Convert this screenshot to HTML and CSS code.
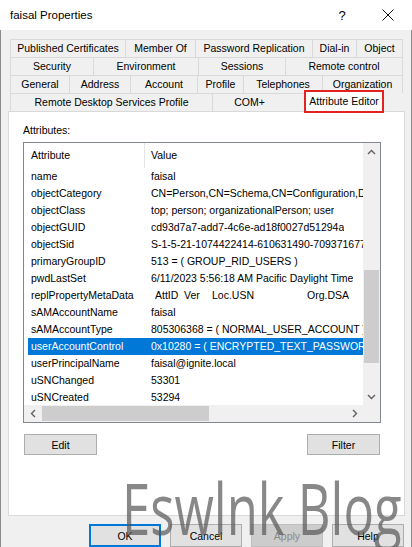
FILE: index.html
```html
<!DOCTYPE html>
<html lang="en">
<head>
<meta charset="utf-8">
<title>faisal Properties</title>
<link rel="stylesheet" href="styles.css">
</head>
<body>
<div class="window">
  <div class="titlebar">
    <span class="title">faisal Properties</span>
    <span class="help">?</span>
    <svg class="close" width="12" height="12" viewBox="0 0 12 12"><path d="M0.5 0.5L11.5 11.5M11.5 0.5L0.5 11.5" stroke="#111" stroke-width="1" fill="none"/></svg>
  </div>

  <div class="dialog">
    <div class="tabs">
      <div class="tabrow r1">
        <div class="tab">Published Certificates</div>
        <div class="tab">Member Of</div>
        <div class="tab">Password Replication</div>
        <div class="tab">Dial-in</div>
        <div class="tab">Object</div>
      </div>
      <div class="tabrow r2">
        <div class="tab">Security</div>
        <div class="tab">Environment</div>
        <div class="tab">Sessions</div>
        <div class="tab">Remote control</div>
      </div>
      <div class="tabrow r3">
        <div class="tab">General</div>
        <div class="tab">Address</div>
        <div class="tab">Account</div>
        <div class="tab">Profile</div>
        <div class="tab">Telephones</div>
        <div class="tab">Organization</div>
      </div>
      <div class="tabrow r4">
        <div class="tab">Remote Desktop Services Profile</div>
        <div class="tab com">COM+</div>
        <div class="tab sel">Attribute Editor</div>
      </div>
    </div>

    <div class="panel">
      <div class="label">Attributes:</div>
      <div class="list">
        <div class="listmain">
          <div class="header">
            <div class="hcol ha">Attribute</div>
            <div class="hcol hv">Value</div>
          </div>
          <div class="rows">
            <div class="row"><span class="a">name</span><span class="v">faisal</span></div>
            <div class="row"><span class="a">objectCategory</span><span class="v">CN=Person,CN=Schema,CN=Configuration,DC=ignite,DC=local</span></div>
            <div class="row"><span class="a">objectClass</span><span class="v">top; person; organizationalPerson; user</span></div>
            <div class="row"><span class="a">objectGUID</span><span class="v">cd93d7a7-add7-4c6e-ad18f0027d51294a</span></div>
            <div class="row"><span class="a">objectSid</span><span class="v">S-1-5-21-1074422414-610631490-709371677-1604</span></div>
            <div class="row"><span class="a">primaryGroupID</span><span class="v">513 = ( GROUP_RID_USERS )</span></div>
            <div class="row"><span class="a">pwdLastSet</span><span class="v">6/11/2023 5:56:18 AM Pacific Daylight Time</span></div>
            <div class="row"><span class="a">replPropertyMetaData</span><span class="v meta"><span class="m1">AttID</span><span class="m2">Ver</span><span class="m3">Loc.USN</span><span class="m4">Org.DSA</span></span></div>
            <div class="row"><span class="a">sAMAccountName</span><span class="v">faisal</span></div>
            <div class="row"><span class="a">sAMAccountType</span><span class="v">805306368 = ( NORMAL_USER_ACCOUNT )</span></div>
            <div class="row selected"><span class="a">userAccountControl</span><span class="v">0x10280 = ( ENCRYPTED_TEXT_PASSWORD_ALLOWED | NORMAL_ACCOUNT )</span></div>
            <div class="row"><span class="a">userPrincipalName</span><span class="v">faisal@ignite.local</span></div>
            <div class="row"><span class="a">uSNChanged</span><span class="v">53301</span></div>
            <div class="row"><span class="a">uSNCreated</span><span class="v">53294</span></div>
          </div>
        </div>

        <div class="vscroll">
          <div class="arrow"><svg width="9" height="6" viewBox="0 0 9 6"><path d="M1 5L4.5 1.5L8 5" fill="none" stroke="#606060" stroke-width="1.4"/></svg></div>
          <div class="vtrack"><div class="vthumb" style="margin-top:110px;height:93px"></div></div>
          <div class="arrow"><svg width="9" height="6" viewBox="0 0 9 6"><path d="M1 1L4.5 4.5L8 1" fill="none" stroke="#606060" stroke-width="1.4"/></svg></div>
        </div>

        <div class="hscroll">
          <div class="arrow"><svg width="6" height="9" viewBox="0 0 6 9"><path d="M5 1L1.5 4.5L5 8" fill="none" stroke="#606060" stroke-width="1.4"/></svg></div>
          <div class="htrack"><div class="hthumb" style="margin-left:1px;width:167px"></div></div>
          <div class="arrow"><svg width="6" height="9" viewBox="0 0 6 9"><path d="M1 1L4.5 4.5L1 8" fill="none" stroke="#606060" stroke-width="1.4"/></svg></div>
        </div>

        <div class="corner"></div>
      </div>

      <div class="actions">
        <button class="btn small">Edit</button>
        <button class="btn small">Filter</button>
      </div>
    </div>

    <div class="footer">
      <button class="btn wide default">OK</button>
      <button class="btn wide">Cancel</button>
      <button class="btn wide disabled">Apply</button>
      <button class="btn wide">Help</button>
    </div>
  </div>

  <div class="watermark">Eswlnk Blog</div>
</div>
</body>
</html>
```

FILE: styles.css
```css
html, body {
  margin: 0;
  padding: 0;
  width: 412px;
  height: 547px;
  overflow: hidden;
  background: #f0f0f0;
}

.window {
  position: relative;
  width: 412px;
  height: 547px;
  overflow: hidden;
  font-family: "Liberation Sans", Arial, sans-serif;
  font-size: 10.5px;
  color: #000;
}

/* ---- title bar ---- */
.titlebar {
  height: 30px;
  background: #fff;
  display: flex;
  align-items: center;
  padding-left: 10px;
  box-sizing: border-box;
}
.title {
  flex: 1;
  font-size: 11.5px;
}
.help {
  width: 10px;
  text-align: center;
  font-size: 13px;
  margin-right: 35px;
}
.close {
  display: block;
  margin-right: 18px;
}

/* ---- dialog body ---- */
.dialog {
  height: 517px;
  box-sizing: border-box;
  border-left: 1px solid #8c8c8c;
  border-right: 1px solid #8c8c8c;
  background: #f0f0f0;
  padding: 9px 6px 0 7px;
  display: flex;
  flex-direction: column;
}

/* ---- tab strip ---- */
.tabs {
  margin: 0 2px;
}
.tabrow {
  display: grid;
  height: 18px;
}
.r1 { grid-template-columns: 115px 70px 117px 44px 1fr; }
.r2 { grid-template-columns: 83px 105px 87px 1fr; }
.r3 { grid-template-columns: 59px 61px 67px 46px 79px 1fr; }
.r4 { grid-template-columns: 202px 94px 78px; }

.tab {
  border-top: 1px solid #d9d9d9;
  border-left: 1px solid #d9d9d9;
  background: #f0f0f0;
  text-align: center;
  line-height: 17px;
  white-space: nowrap;
  overflow: hidden;
}
.tab:last-child {
  border-right: 1px solid #d9d9d9;
}
.tab.com {
  padding-right: 20px;
}
.tab.sel {
  position: relative;
  z-index: 2;
  margin-top: -3px;
  margin-left: -2px;
  height: 22px;
  background: #fff;
  line-height: 20px;
  outline: 2px solid #e3231f;
  outline-offset: -2px;
}

/* ---- tab page ---- */
.panel {
  height: 407px;
  box-sizing: border-box;
  border: 1px solid #d9d9d9;
  background: #fff;
  padding: 12px 0 0 14px;
}
.label {
  line-height: 13px;
  margin-bottom: 5px;
}

.list {
  width: 358px;
  height: 281px;
  box-sizing: border-box;
  border: 1px solid #828790;
  display: grid;
  grid-template-columns: 1fr 17px;
  grid-template-rows: 1fr 17px;
  background: #fff;
}
.listmain {
  overflow: hidden;
  min-width: 0;
}
.header {
  display: flex;
  height: 25px;
  line-height: 25px;
}
.hcol.ha {
  width: 113px;
  padding-left: 7px;
  border-right: 1px solid #e5e5e5;
}
.hcol.hv {
  padding-left: 6px;
}

.rows {
  overflow: hidden;
}
.row {
  display: flex;
  height: 17px;
  line-height: 17px;
  margin-left: 4px;
  white-space: nowrap;
  overflow: hidden;
}
.row .a {
  flex: 0 0 113px;
  padding-left: 3px;
}
.row .v {
  padding-left: 7px;
  overflow: hidden;
}
.row.selected {
  background: #0078d7;
  color: #fff;
}
.meta {
  display: flex;
}
.m1 { width: 29px; padding-left: 4px; }
.m2 { width: 28px; }
.m3 { width: 95px; }

/* ---- scroll bars ---- */
.vscroll {
  display: flex;
  flex-direction: column;
  background: #f0f0f0;
}
.vscroll .arrow {
  height: 17px;
  display: flex;
  align-items: center;
  justify-content: center;
}
.vtrack {
  flex: 1;
  display: flex;
  flex-direction: column;
  align-items: center;
}
.vthumb {
  width: 15px;
  background: #cdcdcd;
}

.hscroll {
  display: flex;
  background: #f0f0f0;
}
.hscroll .arrow {
  width: 17px;
  display: flex;
  align-items: center;
  justify-content: center;
}
.htrack {
  flex: 1;
  display: flex;
  align-items: center;
}
.hthumb {
  height: 15px;
  background: #cdcdcd;
}
.corner {
  background: #f0f0f0;
}

/* ---- buttons ---- */
.actions {
  width: 356px;
  margin: 11px 0 0 1px;
  display: flex;
  justify-content: space-between;
}
.btn {
  font-family: "Liberation Sans", Arial, sans-serif;
  font-size: 10.5px;
  color: #000;
  background: #e1e1e1;
  border: 1px solid #adadad;
  padding: 0;
  margin: 0;
  box-sizing: border-box;
}
.btn.small {
  width: 73px;
  height: 21px;
}
.btn.wide {
  width: 72px;
  height: 23px;
}
.btn.default {
  border-color: #0078d7;
  box-shadow: inset 0 0 0 1px #0078d7;
}
.btn.disabled {
  background: #cccccc;
  border-color: #bfbfbf;
  color: #8a8a8a;
}

.footer {
  display: flex;
  justify-content: flex-end;
  gap: 9px;
  margin-top: 8px;
  padding-right: 1px;
}

/* ---- overlay caption ---- */
.watermark {
  position: absolute;
  left: 122px;
  top: 471px;
  font-family: "Open Sans", sans-serif;
  font-size: 72px;
  line-height: 72px;
  color: rgba(85, 85, 85, 0.7);
  white-space: nowrap;
  transform: scaleX(0.706);
  transform-origin: left top;
  pointer-events: none;
}
```
